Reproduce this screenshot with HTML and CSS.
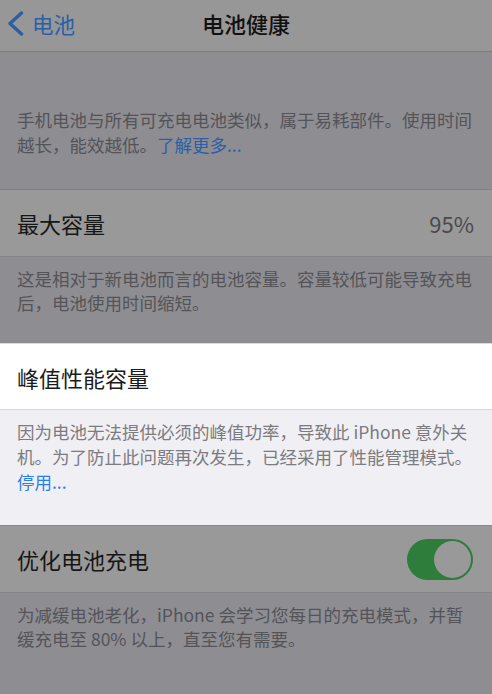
FILE: index.html
```html
<!DOCTYPE html>
<html lang="zh-CN">
<head>
<meta charset="utf-8">
<title>电池健康</title>
<link rel="stylesheet" href="styles.css">
</head>
<body>
<div class="screen">
  <header class="nav">
    <a class="back">
      <svg class="chev" width="20" height="26" viewBox="0 0 20 26"><path d="M15.5 2 L4 12.5 L15.5 23" fill="none" stroke="#2b5ea8" stroke-width="3.4" stroke-linecap="round" stroke-linejoin="round"/></svg>
      <span>电池</span>
    </a>
    <h1 class="title">电池健康</h1>
  </header>

  <p class="note note-top">手机电池与所有可充电电池类似，属于易耗部件。使用时间<br>越长，能效越低。<span class="link">了解更多...</span></p>

  <div class="cell">
    <span class="label">最大容量</span>
    <span class="value">95%</span>
  </div>
  <p class="note note-mid">这是相对于新电池而言的电池容量。容量较低可能导致充电<br>后，电池使用时间缩短。</p>

  <section class="focus">
    <div class="cell cell-light">
      <span class="label">峰值性能容量</span>
    </div>
    <p class="note note-light">因为电池无法提供必须的峰值功率，导致此 iPhone 意外关<br>机。为了防止此问题再次发生，已经采用了性能管理模式。<br><span class="link link-light">停用...</span></p>
  </section>

  <div class="cell">
    <span class="label">优化电池充电</span>
    <span class="toggle"><span class="knob"></span></span>
  </div>
  <p class="note note-bottom">为减缓电池老化，iPhone 会学习您每日的充电模式，并暂<br>缓充电至 80% 以上，直至您有需要。</p>
</div>
</body>
</html>
```

FILE: styles.css
```css
html, body {
  margin: 0;
  padding: 0;
}
body {
  background: #8e8d92;
  font-family: "Noto Sans CJK SC", "Noto Sans", "Liberation Sans", sans-serif;
  width: 492px;
  height: 694px;
  overflow: hidden;
}
.screen {
  display: flex;
  flex-direction: column;
}
.nav {
  height: 51px;
  background: #979797;
  border-bottom: 1px solid #7d7d81;
  display: flex;
  align-items: center;
  justify-content: center;
  position: relative;
}
.back {
  position: absolute;
  left: 6px;
  top: 11px;
  display: flex;
  align-items: center;
  gap: 6px;
  color: #2b5ea8;
  font-size: 21.5px;
  line-height: 26px;
}
.chev {
  display: block;
}
.title {
  margin: 0;
  font-size: 22px;
  font-weight: 500;
  color: #111111;
  line-height: 26px;
  margin-top: -6px;
}
.note {
  margin: 0;
  font-size: 17.5px;
  line-height: 25px;
  color: #545458;
  padding: 0 8px 0 17px;
  white-space: nowrap;
}
.note-top {
  padding-top: 55px;
  padding-bottom: 32px;
  border-bottom: 1px solid #828286;
}
.note-mid {
  padding-top: 10px;
  padding-bottom: 28px;
  line-height: 24px;
}
.note-bottom {
  padding-top: 10px;
  line-height: 24px;
}
.link {
  color: #2b5ea8;
}
.cell {
  height: 66px;
  background: #999999;
  border-bottom: 1px solid #858589;
  display: flex;
  align-items: center;
  justify-content: space-between;
  padding: 0 18px 0 17px;
}
.label {
  font-size: 22px;
  color: #161616;
}
.value {
  font-size: 22px;
  color: #4a4a4c;
}
.focus {
  border-top: 1px solid #d9d9de;
  border-bottom: 1px solid #8a8a8e;
}
.cell-light {
  background: #ffffff;
  border-bottom: 1px solid #d8d8dc;
  height: 65px;
}
.cell-light .label {
  color: #1b1b1b;
}
.note-light {
  background: #f0eff4;
  color: #7b7b80;
  padding-top: 9px;
  padding-bottom: 31px;
}
.link-light {
  color: #2a7fee;
}
.toggle {
  width: 66px;
  height: 41px;
  border-radius: 21px;
  background: #2e7d3a;
  display: flex;
  align-items: center;
  justify-content: flex-end;
  padding: 0 2px;
  box-sizing: border-box;
  margin-right: 1px;
}
.knob {
  width: 37px;
  height: 37px;
  border-radius: 50%;
  background: #999999;
}
```
